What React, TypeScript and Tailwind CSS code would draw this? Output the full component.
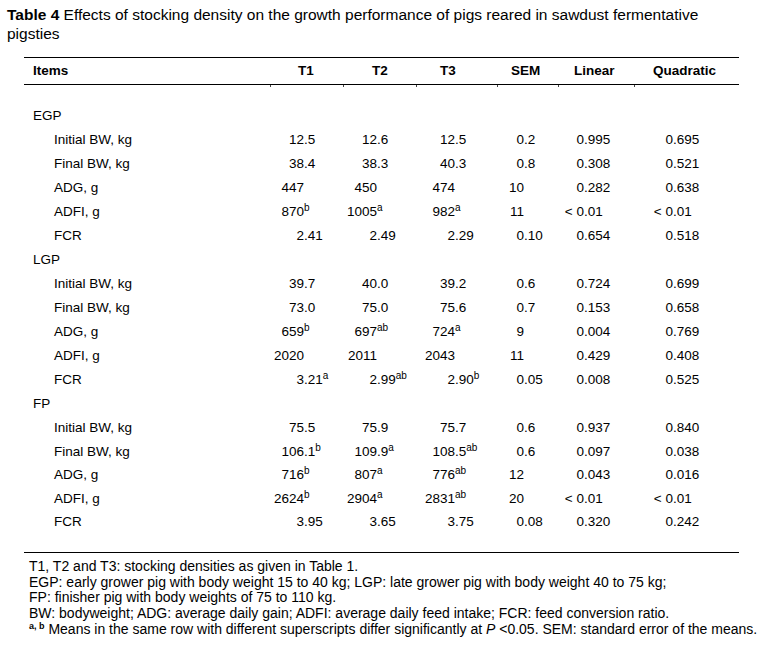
type Row = { label: string; values: string[] };
type Section = { name: string; tight?: boolean; rows: Row[] };

const sections: Section[] = [
  {
    name: "EGP",
    rows: [
      { label: "Initial BW, kg", values: ["12.5", "12.6", "12.5", "0.2", "0.995", "0.695"] },
      { label: "Final BW, kg", values: ["38.4", "38.3", "40.3", "0.8", "0.308", "0.521"] },
      { label: "ADG, g", values: ["447", "450", "474", "10", "0.282", "0.638"] },
      { label: "ADFI, g", values: ["870^b", "1005^a", "982^a", "11", "< 0.01", "< 0.01"] },
      { label: "FCR", values: ["2.41", "2.49", "2.29", "0.10", "0.654", "0.518"] },
    ],
  },
  {
    name: "LGP",
    rows: [
      { label: "Initial BW, kg", values: ["39.7", "40.0", "39.2", "0.6", "0.724", "0.699"] },
      { label: "Final BW, kg", values: ["73.0", "75.0", "75.6", "0.7", "0.153", "0.658"] },
      { label: "ADG, g", values: ["659^b", "697^ab", "724^a", "9", "0.004", "0.769"] },
      { label: "ADFI, g", values: ["2020", "2011", "2043", "11", "0.429", "0.408"] },
      { label: "FCR", values: ["3.21^a", "2.99^ab", "2.90^b", "0.05", "0.008", "0.525"] },
    ],
  },
  {
    name: "FP",
    tight: true,
    rows: [
      { label: "Initial BW, kg", values: ["75.5", "75.9", "75.7", "0.6", "0.937", "0.840"] },
      { label: "Final BW, kg", values: ["106.1^b", "109.9^a", "108.5^ab", "0.6", "0.097", "0.038"] },
      { label: "ADG, g", values: ["716^b", "807^a", "776^ab", "12", "0.043", "0.016"] },
      { label: "ADFI, g", values: ["2624^b", "2904^a", "2831^ab", "20", "< 0.01", "< 0.01"] },
      { label: "FCR", values: ["3.95", "3.65", "3.75", "0.08", "0.320", "0.242"] },
    ],
  },
];

// width of the part before the decimal point, per column (decimal tab)
const intWidths = ["w-[34px]", "w-[34px]", "w-[39px]", "w-[27px]", "w-[26px]", "w-[39px]"];

const headers = [
  { label: "T1", pad: "pl-[28px]" },
  { label: "T2", pad: "pl-[29px]" },
  { label: "T3", pad: "pl-[24px]" },
  { label: "SEM", pad: "pl-[14px]" },
  { label: "Linear", pad: "pl-[16px]" },
  { label: "Quadratic", pad: "pl-[19px]" },
];

const gridCols = "grid grid-cols-[246px_73px_73px_81px_61px_76px_105px]";

function Value({ text, col }: { text: string; col: number }) {
  const [num, sup] = text.split("^");
  const dot = num.indexOf(".");
  const whole = dot === -1 ? num : num.slice(0, dot);
  const frac = dot === -1 ? "" : num.slice(dot);
  return (
    <div className="whitespace-pre">
      <span className={`inline-block text-right ${intWidths[col]}`}>{whole}</span>
      {frac}
      {sup && <sup className="text-[10px] top-[-5px]">{sup}</sup>}
    </div>
  );
}

export default function App() {
  return (
    <div className="w-[760px] h-[649px] bg-white text-black font-['Liberation_Sans',Arial,sans-serif] overflow-hidden">
      <p className="pl-[7px] pt-[5px] w-[750px] text-[15.5px] leading-[19px] whitespace-nowrap">
        <b>Table 4</b> Effects of stocking density on the growth performance of pigs reared in sawdust fermentative
        <br />
        pigsties
      </p>

      <div className="ml-[24px] mt-[14px] w-[715px] border-t border-black text-[13.5px]">
        <div className={`${gridCols} h-[27px] items-center border-b border-black font-bold`}>
          <div className="pl-[9px]">Items</div>
          {headers.map((h) => (
            <div key={h.label} className={h.pad}>
              {h.label}
            </div>
          ))}
        </div>
        <div className={`${gridCols} h-[2px]`}>
          <div />
          {headers.map((h) => (
            <div key={h.label} className="border-l border-[#444]" />
          ))}
        </div>
        <div className="h-[17px]" />

        {sections.map((s) => (
          <div key={s.name}>
            <div className="h-[24px] leading-[24px] pl-[9px]">{s.name}</div>
            {s.rows.map((r) => (
              <div
                key={r.label}
                className={`${gridCols} ${s.tight ? "h-[23.6px] leading-[23.6px]" : "h-[24px] leading-[24px]"}`}
              >
                <div className="pl-[30px]">{r.label}</div>
                {r.values.map((v, i) => (
                  <Value key={i} text={v} col={i} />
                ))}
              </div>
            ))}
          </div>
        ))}
        <div className="h-[19px] border-b border-black" />
      </div>

      <div className="pl-[29px] mt-[6px] text-[14px] leading-[15.65px] whitespace-nowrap">
        <p>T1, T2 and T3: stocking densities as given in Table 1.</p>
        <p>EGP: early grower pig with body weight 15 to 40 kg; LGP: late grower pig with body weight 40 to 75 kg;</p>
        <p>FP: finisher pig with body weights of 75 to 110 kg.</p>
        <p>BW: bodyweight; ADG: average daily gain; ADFI: average daily feed intake; FCR: feed conversion ratio.</p>
        <p>
          <sup className="text-[9px] font-bold">a, b</sup> Means in the same row with different superscripts differ
          significantly at <i>P</i> &lt;0.05. SEM: standard error of the means.
        </p>
      </div>
    </div>
  );
}
